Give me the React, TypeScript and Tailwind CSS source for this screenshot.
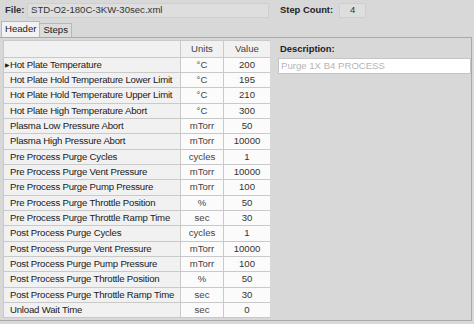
import type { FC } from 'react';
import clsx from 'clsx';

type Param = { name: string; units: string; value: string };

const params: Param[] = [
  { name: 'Hot Plate Temperature', units: '°C', value: '200' },
  { name: 'Hot Plate Hold Temperature Lower Limit', units: '°C', value: '195' },
  { name: 'Hot Plate Hold Temperature Upper Limit', units: '°C', value: '210' },
  { name: 'Hot Plate High Temperature Abort', units: '°C', value: '300' },
  { name: 'Plasma Low Pressure Abort', units: 'mTorr', value: '50' },
  { name: 'Plasma High Pressure Abort', units: 'mTorr', value: '10000' },
  { name: 'Pre Process Purge Cycles', units: 'cycles', value: '1' },
  { name: 'Pre Process Purge Vent Pressure', units: 'mTorr', value: '10000' },
  { name: 'Pre Process Purge Pump Pressure', units: 'mTorr', value: '100' },
  { name: 'Pre Process Purge Throttle Position', units: '%', value: '50' },
  { name: 'Pre Process Purge Throttle Ramp Time', units: 'sec', value: '30' },
  { name: 'Post Process Purge Cycles', units: 'cycles', value: '1' },
  { name: 'Post Process Purge Vent Pressure', units: 'mTorr', value: '10000' },
  { name: 'Post Process Purge Pump Pressure', units: 'mTorr', value: '100' },
  { name: 'Post Process Purge Throttle Position', units: '%', value: '50' },
  { name: 'Post Process Purge Throttle Ramp Time', units: 'sec', value: '30' },
  { name: 'Unload Wait Time', units: 'sec', value: '0' },
];

const ParamRow: FC<Param & { index: number }> = ({ name, units, value, index }) => (
  <div
    className={clsx(
      'grid grid-cols-[177px_43px_46px] border-b border-[#c9c9c9]',
      index % 3 === 2 ? 'h-[16px]' : 'h-[15px]'
    )}
  >
    <div className="flex items-center bg-[#f1f1f1] border-r border-[#c9c9c9] pl-[1px] whitespace-nowrap overflow-hidden">
      <span className="w-[5px] shrink-0 text-[6px] text-[#222]">{index === 0 ? '▶' : ''}</span>
      <span className="tracking-[-0.2px]">{name}</span>
    </div>
    <div className="flex items-center justify-center bg-[#fbfbfb] border-r border-[#c9c9c9] text-[#444]">
      {units}
    </div>
    <div className="flex items-center justify-center bg-[#fbfbfb] text-[#333]">{value}</div>
  </div>
);

export default function App() {
  return (
    <div className="w-[474px] h-[324px] bg-[#d8d8d8] overflow-hidden text-[9.6px] text-[#1a1a1a] font-['Liberation_Sans',Arial,sans-serif]">
      {/* top bar */}
      <div className="flex items-center h-[20px] pt-[1px] pl-[5px]">
        <span className="font-bold text-[9.5px] text-[#333] w-[21px]">File:</span>
        <div className="w-[242px] h-[15px] ml-[1px] flex items-center pl-[3px] bg-[#dedede] border border-[#cfcfcf] text-[#333]">
          STD-O2-180C-3KW-30sec.xml
        </div>
        <span className="font-bold text-[9.4px] text-[#222] ml-[11px]">Step Count:</span>
        <div className="w-[27px] h-[15px] ml-[6px] flex items-center justify-center bg-[#dedede] border border-[#cfcfcf] text-[#333]">
          4
        </div>
      </div>

      {/* tabs */}
      <div className="flex items-end h-[16px] pl-[1px] mt-[1px]">
        <div className="h-[16px] px-[3px] flex items-center bg-[#f2f2f2] border border-b-0 border-[#b8b8b8]">
          Header
        </div>
        <div className="h-[14px] px-[3px] flex items-center bg-[#dcdcdc] border border-b-0 border-l-0 border-[#b8b8b8]">
          Steps
        </div>
      </div>

      {/* panel */}
      <div className="h-[284px] mr-[2px] border-t border-r border-b border-[#a9a9a9] flex gap-[8px] pl-[3px] pt-[2px]">
        <div className="flex flex-col border-t border-l border-[#c9c9c9] self-start">
          <div className="grid grid-cols-[177px_43px_46px] h-[17px] border-b border-[#c9c9c9] bg-[#f1f1f1]">
            <div className="border-r border-[#c9c9c9]" />
            <div className="flex items-center justify-center border-r border-[#c9c9c9] text-[#444]">Units</div>
            <div className="flex items-center justify-center text-[#444]">Value</div>
          </div>
          {params.map((p, i) => (
            <ParamRow key={i} index={i} {...p} />
          ))}
        </div>

        <div className="flex flex-col w-[193px] pt-[2px]">
          <span className="font-bold text-[9.4px] text-[#222] pl-[2px]">Description:</span>
          <div className="h-[16px] mt-[2px] flex items-center pl-[2px] bg-white border border-[#c4c4c4] text-[#b5b5b5]">
            Purge 1X B4 PROCESS
          </div>
        </div>
      </div>
    </div>
  );
}
